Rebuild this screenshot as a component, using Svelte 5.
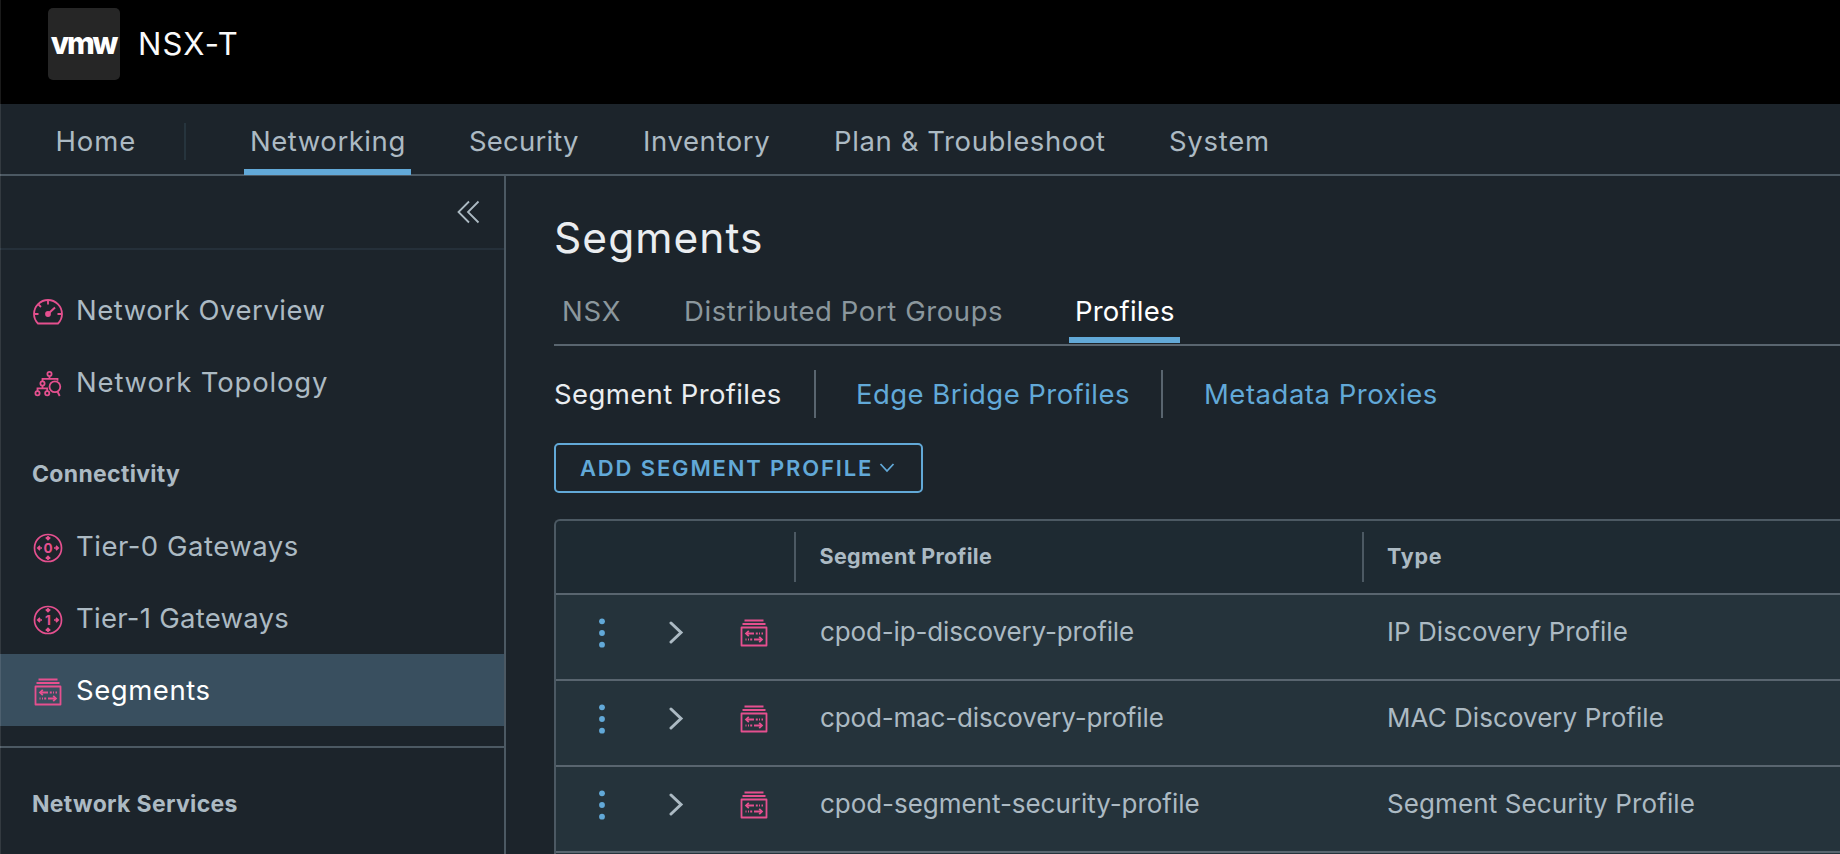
<script>
  const nav = [
    { label: 'Networking', width: 217, ls: 0.55, active: true },
    { label: 'Security', width: 174, ls: 0.2 },
    { label: 'Inventory', width: 191, ls: 0.6 },
    { label: 'Plan & Troubleshoot', width: 335, ls: 0.6 },
    { label: 'System', width: 130, ls: 0.7 }
  ];

  const overview = [
    { label: 'Network Overview', icon: 'gauge', ls: 0.53 },
    { label: 'Network Topology', icon: 'topology', ls: 0.82 }
  ];

  const connectivity = [
    { label: 'Tier-0 Gateways', icon: 'tier', digit: '0', ls: 0.5 },
    { label: 'Tier-1 Gateways', icon: 'tier', digit: '1', ls: 0.27 },
    { label: 'Segments', icon: 'segment', ls: 0.55, active: true }
  ];

  const rows = [
    { name: 'cpod-ip-discovery-profile', nls: -0.14, type: 'IP Discovery Profile', tls: 0.05 },
    { name: 'cpod-mac-discovery-profile', nls: -0.15, type: 'MAC Discovery Profile', tls: 0.05 },
    { name: 'cpod-segment-security-profile', nls: -0.04, type: 'Segment Security Profile', tls: 0.11 }
  ];
</script>

{#snippet gauge()}
  <svg class="icon" viewBox="0 0 36 36"><g fill="none" stroke="currentColor" stroke-width="1.800">
    <path d="M8 29.500C5.200 26.700 4 23.600 4 20A14 14 0 0 1 32 20C32 23.600 30.800 26.700 28 29.500Z" stroke-linejoin="round" />
    <path d="M18 6.500V10.500M4.500 20H8.500M27.500 20H31.500M8.500 10.500L11 13" />
    <path d="M18 20L25 13.500" stroke-width="2" /></g>
    <circle cx="18" cy="20" r="2.900" fill="currentColor" />
  </svg>
{/snippet}

{#snippet topology()}
  <svg class="icon" viewBox="0 0 36 36"><g fill="none" stroke="currentColor" stroke-width="1.800">
    <circle cx="19.500" cy="8" r="2.100" /><circle cx="12.500" cy="17.500" r="2.100" />
    <circle cx="7.500" cy="27.200" r="2.100" /><circle cx="17.200" cy="27.200" r="2.100" />
    <path d="M19.500 10.300V12.800M12.500 15.300V12.800H27.500V14.800M12.500 19.700V22.400M7.500 25V22.400H17.200V25" />
    <circle cx="24.900" cy="20.800" r="5.400" /><path d="M27.700 26L29.700 30" /></g>
  </svg>
{/snippet}

{#snippet tier(digit)}
  <svg class="icon" viewBox="0 0 36 36"><g fill="none" stroke="currentColor" stroke-width="1.700">
    <circle cx="18" cy="18" r="13.500" />
    <path d="M18 6V9.500M15.800 7.300L18 9.500L20.200 7.300M18 30V26.500M15.800 28.700L18 26.500L20.200 28.700M12 18H8M10 15.800L7.800 18L10 20.200M24 18H28M26 15.800L28.200 18L26 20.200" /></g>
    <text x="18" y="22.800" text-anchor="middle" font-size="13.500" font-weight="650" fill="currentColor">{digit}</text>
  </svg>
{/snippet}

{#snippet segment()}
  <svg class="icon" viewBox="0 0 36 36"><g fill="none" stroke="currentColor" stroke-width="1.800">
    <path d="M8.500 5.500H27.500M6.500 9H29.500" />
    <rect x="5.500" y="12.500" width="25" height="18" stroke-linejoin="round" />
    <path d="M10 18.500H18M19.800 18.500H21.800M23 18.500H24M25.500 18.500H27M26 24.500H18M16.200 24.500H14.200M13 24.500H12M10.500 24.500H9.500" />
    <path d="M12.800 15.800L10 18.500L12.800 21.200M23.200 21.800L26 24.500L23.200 27.200" /></g>
  </svg>
{/snippet}

{#snippet sideItem(item)}
  <a class="side-item" class:selected={item.active} href="#top">
    {#if item.icon === 'gauge'}{@render gauge()}
    {:else if item.icon === 'topology'}{@render topology()}
    {:else if item.icon === 'tier'}{@render tier(item.digit)}
    {:else}{@render segment()}{/if}
    <span class="t" style:letter-spacing="{item.ls}px">{item.label}</span>
  </a>
{/snippet}

<div class="app">
  <header class="brand">
    <div class="logo"><span class="t">vmw</span></div>
    <span class="product t">NSX-T</span>
  </header>

  <nav class="main-nav">
    <a class="home" href="#top"><span class="t">Home</span></a>
    <i class="nav-divider"></i>
    <div class="links">
      {#each nav as n}
        <a href="#top" style:width="{n.width}px" class:first-link={n.active}><span class="nav-label" class:current={n.active}><span class="t" style:letter-spacing="{n.ls}px">{n.label}</span></span></a>
      {/each}
    </div>
  </nav>

  <div class="body">
    <aside>
      <div class="collapse">
        <svg width="24" height="24" viewBox="0 0 24 24" fill="none" stroke="currentColor" stroke-width="1.800"><path d="M13 1.500L2.500 12L13 22.500M22.500 1.500L12 12L22.500 22.500" /></svg>
      </div>
      <div class="group first">{#each overview as item}{@render sideItem(item)}{/each}</div>
      <h4 class="conn"><span class="t">Connectivity</span></h4>
      <div class="group">{#each connectivity as item}{@render sideItem(item)}{/each}</div>
      <h4 class="serv"><span class="t">Network Services</span></h4>
    </aside>

    <main>
      <h1><span class="t">Segments</span></h1>
      <div class="tabs">
        <span class="tab nsx"><span class="t">NSX</span></span>
        <span class="tab dpg"><span class="t">Distributed Port Groups</span></span>
        <span class="tab prof"><span class="t">Profiles</span></span>
      </div>
      <div class="subtabs">
        <span class="sub s1"><span class="t">Segment Profiles</span></span>
        <span class="sub s2"><span class="t">Edge Bridge Profiles</span></span>
        <span class="sub s3"><span class="t">Metadata Proxies</span></span>
      </div>
      <button><span class="t">ADD SEGMENT PROFILE</span>
        <svg width="16" height="12" viewBox="0 0 16 12" fill="none" stroke="currentColor" stroke-width="1.800"><path d="M1.500 2L8 9L14.500 2" /></svg>
      </button>
      <div class="grid">
        <div class="row head"><div class="c0"></div><div class="c1"><span class="t">Segment Profile</span></div><div class="c2"><span class="t type-head">Type</span></div></div>
        {#each rows as r}
          <div class="row item">
            <div class="c0">
              <svg class="dots" width="8" height="30" viewBox="0 0 8 30" fill="currentColor"><circle cx="4" cy="3.300" r="2.900" /><circle cx="4" cy="15" r="2.900" /><circle cx="4" cy="26.700" r="2.900" /></svg>
              <svg class="caret" width="16" height="24" viewBox="0 0 16 24" fill="none" stroke="currentColor" stroke-width="3" stroke-linecap="round"><path d="M3 2L13 11.500L3 21" /></svg>
              {@render segment()}
            </div>
            <div class="c1"><span class="t" style:letter-spacing="{r.nls}px">{r.name}</span></div>
            <div class="c2"><span class="t" style:letter-spacing="{r.tls}px">{r.type}</span></div>
          </div>
        {/each}
        <div class="row item"></div>
      </div>
    </main>
  </div>
</div>

<style>
  :global(body) { margin: 0; overflow: hidden; background: #1c242b; }
  .app { position: relative; box-sizing: border-box; width: 1840px; height: 854px; overflow: hidden; background: #1c242b; color: #acbac3; font: 27.5px/34px Inter, sans-serif; }
  .app::after { content: ''; position: absolute; left: 0; top: 0; width: 1px; height: 854px; background: rgba(255, 255, 255, 0.1); }
  .app * { box-sizing: border-box; }
  a { color: inherit; text-decoration: none; }
  .t { white-space: nowrap; }
  .brand { height: 104px; background: #000; display: flex; align-items: flex-start; padding: 8px 0 0 48px; }
  .logo { width: 72px; height: 72px; border-radius: 5px; background: #262626; color: #fff; display: flex; justify-content: center; align-items: center; font-size: 30px; font-weight: 800; letter-spacing: -2.200px; padding: 0 1px 2px 0; }
  .product { margin: 19px 0 0 18px; font-size: 31px; letter-spacing: 1.200px; color: #fafafa; }
  .main-nav { height: 72px; border-bottom: 2px solid #4c5963; display: flex; }
  .home { width: 184px; padding: 20px 0 0 55.5px; letter-spacing: 0.900px; }
  .nav-divider { width: 2px; height: 37px; margin-top: 19px; background: #26343d; }
  .links { display: flex; padding-left: 58px; }
  .links a { height: 71px; padding-top: 20px; }
  .links .first-link { margin-right: 1px; }
  .nav-label { display: block; height: 51px; padding-left: 7px; }
  .nav-label.current { width: 167px; padding-left: 6px; border-bottom: 6px solid #62a9d8; }
  .body { display: flex; height: 678px; }
  aside { width: 506px; border-right: 2px solid #4c5963; }
  .collapse { height: 74px; border-bottom: 2px solid #25303a; display: flex; justify-content: flex-end; padding: 24px 24px 0 0; }
  .first { padding-top: 24px; }
  .side-item { height: 72px; display: flex; align-items: center; padding-left: 30px; gap: 10px; }
  .icon { width: 36px; height: 36px; color: #e5508f; flex: none; }
  .side-item .icon { margin-top: 4px; }
  .selected { background: #394f5f; color: #fff; }
  h4 { margin: 0; padding-left: 32px; font-size: 23px; font-weight: 650; line-height: 30px; letter-spacing: 0.320px; }
  .conn { padding-top: 41px; height: 92px; }
  .serv { margin-top: 20px; border-top: 2px solid #4c5963; padding-top: 41px; }
  main { flex: 1; padding: 37px 0 0 48px; }
  h1 { margin: 0; height: 80px; font-size: 42.5px; font-weight: 400; line-height: 50px; letter-spacing: 1.050px; color: #eaedf0; }
  .tabs { height: 53px; border-bottom: 2px solid #59656f; display: flex; color: #8b979d; }
  .tab { height: 50px; padding: 1px 0 0 8px; }
  .nsx { width: 122px; letter-spacing: 0.800px; }
  .dpg { width: 393px; letter-spacing: 0.580px; }
  .prof { width: 111px; padding-left: 6px; letter-spacing: 0.200px; color: #fff; border-bottom: 6px solid #62a9d8; }
  .subtabs { display: flex; padding-top: 24px; height: 97px; color: #62a9d8; }
  .sub { height: 48px; padding-top: 7px; }
  .s1 { color: #eaedf0; width: 262px; border-right: 2px solid #59656f; letter-spacing: 0.380px; }
  .s2 { width: 347px; padding-left: 40px; border-right: 2px solid #59656f; letter-spacing: 0.450px; }
  .s3 { padding-left: 41px; letter-spacing: 0.520px; }
  button { width: 369px; height: 50px; border: 2px solid #62a9d8; border-radius: 5px; background: none; color: #62a9d8; padding: 0 0 0 24px; font: 600 22px/30px Inter, sans-serif; letter-spacing: 1.850px; display: flex; align-items: center; gap: 6px; }
  .grid { margin-top: 26px; border: 2px solid #4c5963; border-right: 0; border-radius: 6px 0 0 0; background: #1e2a32; height: 400px; }
  .row { display: flex; align-items: center; height: 86px; border-top: 2px solid #59656f; background: #25333b; font-size: 26px; }
  .item { padding-bottom: 8px; }
  .row .c0 { width: 238px; display: flex; align-items: center; }
  .row .c1 { width: 568px; padding-left: 26px; }
  .row .c2 { padding-left: 25px; }
  .item .c1, .item .c2 { padding-bottom: 3px; }
  .head { height: 72px; border: 0; background: none; font-size: 21.5px; font-weight: 650; letter-spacing: 0.320px; }
  .head .c1, .head .c2 { border-left: 2px solid #4c5963; height: 50px; padding-top: 7px; }
  .head .c1 { padding-left: 23.5px; }
  .head .c2 { padding-left: 23px; }
  .type-head { letter-spacing: 0.750px; }
  .dots { margin-left: 42px; color: #62a9d8; }
  .caret { margin: 0 52px 0 62px; }
</style>
